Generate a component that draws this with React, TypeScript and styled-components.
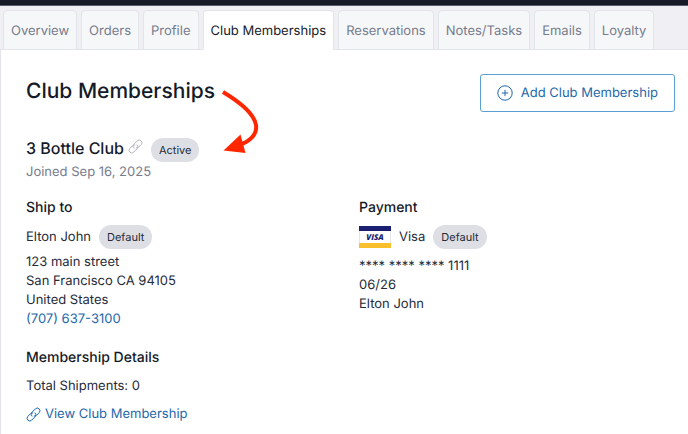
import React from 'react';
import styled, { createGlobalStyle } from 'styled-components';

const GlobalStyle = createGlobalStyle`
  *, *::before, *::after { box-sizing: border-box; }
  body {
    margin: 0;
    background: #fff;
    color: #252b3a;
    font-family: Inter, "Liberation Sans", sans-serif;
    font-size: 13px;
    line-height: 19px;
    text-rendering: geometricPrecision;
  }
  h1, h2, h3, p { margin: 0; }
`;

const TopBar = styled.div`
  height: 6px;
  background: #171a27;
  border-bottom: 1px solid #59596a;
`;

const TabStrip = styled.nav`
  display: flex;
  gap: 4px;
  height: 44px;
  padding: 4px 3px 0;
  background: #efeff4;
  border-bottom: 1px solid #e3e4e9;
`;

const Tab = styled.a<{ $active?: boolean }>`
  flex: none;
  height: 40px;
  padding: 0 7px;
  border: 1px solid #e3e4e9;
  border-bottom-color: ${(p) => (p.$active ? '#fff' : '#e3e4e9')};
  border-radius: 4px 4px 0 0;
  background: ${(p) => (p.$active ? '#fff' : '#f6f7f9')};
  color: ${(p) => (p.$active ? '#151a28' : '#767c8c')};
  line-height: 40px;
  text-decoration: none;
  white-space: nowrap;
`;

const Panel = styled.main`
  padding: 24px 13px 10px 25px;
  border-left: 1px solid #e3e4e9;
`;

const PanelHeader = styled.header`
  display: flex;
  justify-content: space-between;
  align-items: flex-start;
`;

const Title = styled.h1`
  color: #151a28;
  font-size: 21px;
  font-weight: 500;
  line-height: 36px;
`;

const AddButton = styled.button`
  display: flex;
  align-items: center;
  gap: 8px;
  height: 38px;
  padding: 0 16px;
  border: 1px solid #5b9fd4;
  border-radius: 3px;
  background: #fff;
  color: #1d68ab;
  font: inherit;
  text-rendering: inherit;
  cursor: pointer;
`;

const ClubRow = styled.div`
  display: flex;
  align-items: baseline;
  height: 24px;
  margin-top: 26px;
`;

const ClubName = styled.h2`
  color: #151a28;
  font-size: 16px;
  font-weight: 500;
  line-height: 20px;
`;

const IconLink = styled.a`
  display: flex;
  align-self: flex-start;
  margin: 1px 8px 0 4px;
  color: #b4b8c1;
`;

const Pill = styled.span`
  padding: 0 8px;
  border-radius: 12px;
  background: #dedfe4;
  color: #252b3a;
  font-size: 11px;
  line-height: 24px;
`;

const Joined = styled.p`
  color: #767c8c;
  line-height: 20px;
`;

const Columns = styled.div`
  display: grid;
  grid-template-columns: 1fr 1fr;
  column-gap: 17px;
  margin-top: 16px;
`;

const SectionTitle = styled.h3`
  color: #151a28;
  font-size: 14px;
  font-weight: 500;
  line-height: 20px;
`;

const NameRow = styled.div<{ $gapBelow: number }>`
  display: flex;
  align-items: baseline;
  gap: 8px;
  height: 24px;
  margin: 7px 0 ${(p) => p.$gapBelow}px;
`;

const CardArt = styled.svg`
  align-self: center;
  width: 32px;
  height: 22px;
`;

const Phone = styled.a`
  color: #1d68ab;
  text-decoration: none;
`;

const Details = styled.section`
  margin-top: 19px;
`;

const Total = styled.p`
  margin: 9px 0;
`;

const ViewLink = styled.a`
  display: inline-flex;
  align-items: center;
  gap: 4px;
  color: #1d68ab;
  text-decoration: none;
`;

const ArrowSvg = styled.svg`
  position: absolute;
  left: 220px;
  top: 86px;
  width: 44px;
  height: 72px;
  pointer-events: none;
`;

const LinkIcon = ({ size }: { size: number }) => (
  <svg width={size} height={size} viewBox="0 0 24 24" fill="none" stroke="currentColor" strokeWidth="1.6" strokeLinecap="round" strokeLinejoin="round" aria-hidden="true">
    <path d="M9.4 14.6a4.3 4.3 0 0 1 0-6.1l5.5-5.5a4.3 4.3 0 0 1 6.1 6.1l-4.2 4.2a4.3 4.3 0 0 1-3.6 1.2" />
    <path d="M14.6 9.4a4.3 4.3 0 0 1 0 6.1L9.1 21A4.3 4.3 0 0 1 3 14.9l4.2-4.2a4.3 4.3 0 0 1 3.6-1.2" />
  </svg>
);

const PlusCircle = () => (
  <svg width="16" height="16" viewBox="0 0 16 16" fill="none" stroke="currentColor" aria-hidden="true">
    <circle cx="8" cy="8" r="7.2" />
    <path d="M8 4.8v6.4M4.8 8h6.4" />
  </svg>
);

const VisaCard = () => (
  <CardArt viewBox="0 0 32 22" role="img" aria-label="Visa card">
    <rect x="0.5" y="0.5" width="31" height="21" fill="#fff" stroke="#e4e5ea" />
    <rect width="32" height="5" fill="#1a1f71" />
    <rect y="17" width="32" height="5" fill="#f9bf2c" />
    <text x="16" y="14" textAnchor="middle" fill="#1a1f71" fontFamily="Open Sans, sans-serif" fontSize="8" fontWeight="800" fontStyle="italic">VISA</text>
  </CardArt>
);

const tabs = ['Overview', 'Orders', 'Profile', 'Club Memberships', 'Reservations', 'Notes/Tasks', 'Emails', 'Loyalty'];

export default function App() {
  return (
    <>
      <GlobalStyle />
      <TopBar />
      <TabStrip aria-label="Customer sections">
        {tabs.map((name) => {
          const active = name === 'Club Memberships';
          return (
            <Tab key={name} href="#" $active={active} aria-current={active ? 'page' : undefined}>
              {name}
            </Tab>
          );
        })}
      </TabStrip>
      <Panel>
        <PanelHeader>
          <Title>Club Memberships</Title>
          <AddButton type="button">
            <PlusCircle />
            Add Club Membership
          </AddButton>
        </PanelHeader>
        <ClubRow>
          <ClubName>3 Bottle Club</ClubName>
          <IconLink href="#" aria-label="Link to 3 Bottle Club">
            <LinkIcon size={15} />
          </IconLink>
          <Pill>Active</Pill>
        </ClubRow>
        <Joined>Joined Sep 16, 2025</Joined>
        <Columns>
          <section>
            <SectionTitle>Ship to</SectionTitle>
            <NameRow $gapBelow={4}>
              <span>Elton John</span>
              <Pill>Default</Pill>
            </NameRow>
            <p>123 main street</p>
            <p>San Francisco CA 94105</p>
            <p>United States</p>
            <p><Phone href="tel:+17076373100">(707) 637-3100</Phone></p>
          </section>
          <section>
            <SectionTitle>Payment</SectionTitle>
            <NameRow $gapBelow={8}>
              <VisaCard />
              <span>Visa</span>
              <Pill>Default</Pill>
            </NameRow>
            <p>**** **** **** 1111</p>
            <p>06/26</p>
            <p>Elton John</p>
          </section>
        </Columns>
        <Details>
          <SectionTitle>Membership Details</SectionTitle>
          <Total>Total Shipments: 0</Total>
          <ViewLink href="#">
            <LinkIcon size={15} />
            View Club Membership
          </ViewLink>
        </Details>
      </Panel>
      <ArrowSvg viewBox="0 0 44 72" aria-hidden="true">
        <path d="M3 6C18 15 34 27 36 39C37.5 49 29 56 18 59.5" fill="none" stroke="#ff2600" strokeWidth="4" />
        <path d="M3.5 64.5L20.5 48.5L25.5 67Z" fill="#ff2600" />
      </ArrowSvg>
    </>
  );
}
